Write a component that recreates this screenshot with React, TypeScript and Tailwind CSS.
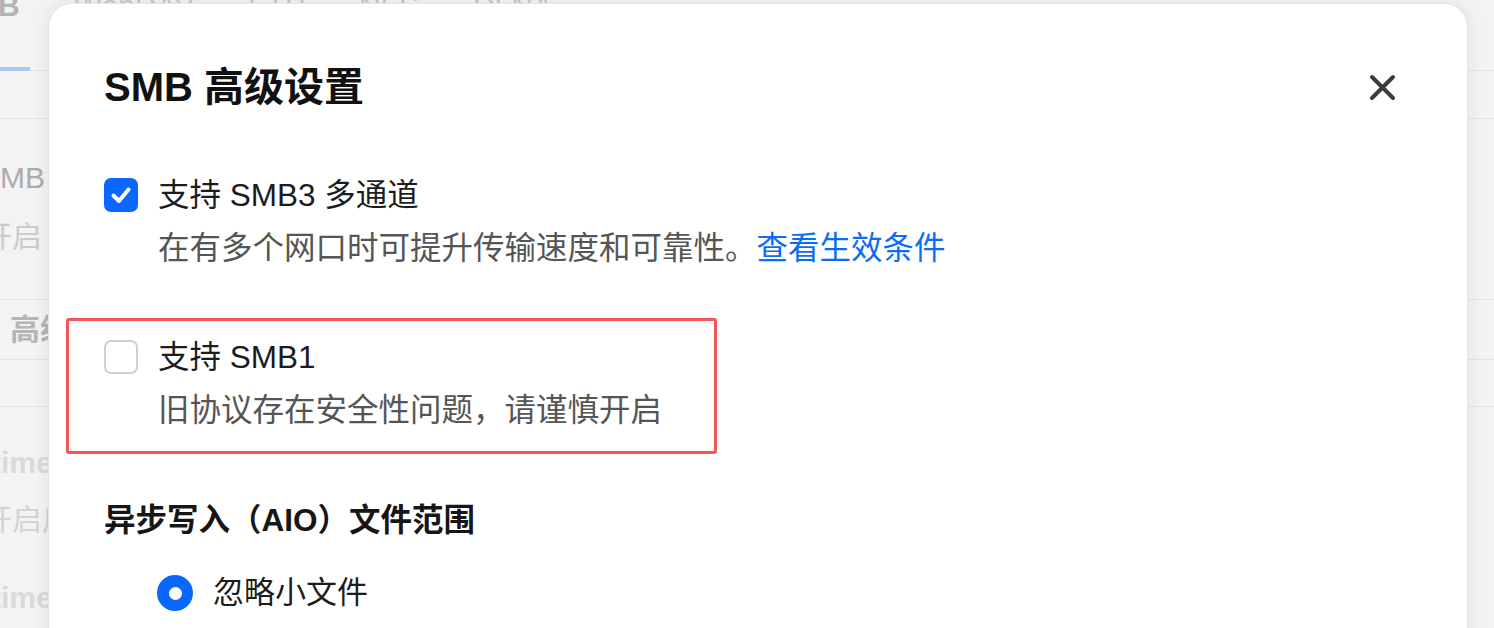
import React from "react";

const FONT = { fontFamily: '"Liberation Sans", "Noto Sans CJK SC", sans-serif' };

function CheckedBox() {
  return (
    <div className="mt-[3px] flex h-[34px] w-[34px] shrink-0 items-center justify-center rounded-[7px] bg-[#0a68ff]">
      <svg width="34" height="34" viewBox="0 0 34 34" fill="none">
        <polyline
          points="9.5,17.5 15,23 24.5,11.5"
          stroke="#fff"
          strokeWidth="4"
          strokeLinecap="round"
          strokeLinejoin="round"
        />
      </svg>
    </div>
  );
}

function EmptyBox() {
  return <div className="mt-[3px] h-[34px] w-[34px] shrink-0 rounded-[7px] border-2 border-[#cfcfcf] bg-white" />;
}

function CloseIcon() {
  return (
    <svg width="27" height="27" viewBox="0 0 27 27" fill="none">
      <path d="M3 3 L24 24 M24 3 L3 24" stroke="#3b3b3b" strokeWidth="4" strokeLinecap="round" />
    </svg>
  );
}

function BackdropPage() {
  return (
    <div className="flex h-full w-full flex-col bg-[#f3f3f3]" style={FONT}>
      {/* tab bar */}
      <div className="relative h-[71px] border-b border-[#e3e3e3]">
        <div className="-mt-[12px] flex items-end gap-[54px] text-[30px] leading-[36px]">
          <div className="-ml-[47px] flex flex-col">
            <span className="font-bold text-[#b3b3b3]">SMB</span>
          </div>
          <span className="text-[#c9c9c9]">WebDAV</span>
          <span className="text-[#c9c9c9]">FTP</span>
          <span className="text-[#c9c9c9]">NFS</span>
          <span className="text-[#c9c9c9]">DLNA</span>
        </div>
        <div className="absolute bottom-[-1px] left-0 h-[4px] w-[30px] bg-[#a9c8f6]" />
      </div>
      <div className="h-[48px] border-b border-[#e3e3e3]" />
      <div className="-ml-[20px] flex h-[181px] flex-col border-b border-[#e3e3e3] pt-[41px]">
        <span className="text-[30px] leading-[36px] text-[#acacac]">SMB</span>
        <span className="ml-[2px] mt-[23px] text-[30px] leading-[36px] text-[#cbcbcb]">开启</span>
      </div>
      <div className="flex h-[60px] items-center border-b border-[#e3e3e3] pl-[10px]">
        <span className="text-[30px] font-bold leading-[36px] text-[#b5b5b5]">高级设置</span>
      </div>
      <div className="h-[47px] border-b border-[#e3e3e3]" />
      <div className="-ml-[9px] flex flex-col pt-[38px]">
        <span className="text-[30px] font-bold leading-[36px] text-[#dadada]">time</span>
        <span className="-ml-[9px] mt-[21px] text-[30px] leading-[36px] text-[#d3d3d3]">开启后</span>
        <span className="mt-[42px] text-[30px] font-bold leading-[36px] text-[#dadada]">time</span>
      </div>
    </div>
  );
}

function SettingsDialog() {
  return (
    <div
      className="absolute left-[48px] top-[3px] h-[720px] w-[1420px] rounded-[24px] border border-[#e6e6e6] bg-white shadow-[0_0_18px_rgba(0,0,0,0.08)]"
      style={FONT}
    >
      <div className="flex flex-col pl-[55px] pr-[71px] pt-[59px]">
        <div className="flex h-[48px] items-center justify-between">
          <h2 className="text-[40px] font-bold leading-[48px] text-[#111111]">SMB 高级设置</h2>
          <button className="flex h-[27px] w-[27px] items-center justify-center">
            <CloseIcon />
          </button>
        </div>

        <div className="mt-[64px] flex gap-[20px]">
          <CheckedBox />
          <div className="flex flex-col">
            <span className="text-[31.5px] leading-[40px] text-[#1c1c1c]">支持 SMB3 多通道</span>
            <span className="mt-[13px] text-[31.5px] leading-[40px] text-[#555555]">
              在有多个网口时可提升传输速度和可靠性。
              <span className="text-[#0b6cf4]">查看生效条件</span>
            </span>
          </div>
        </div>

        <div className="-ml-[38px] mt-[50px] flex h-[136px] w-[651px] gap-[20px] rounded-[3px] border-[3px] border-[#f25656] pl-[35px] pt-[16px]">
          <EmptyBox />
          <div className="flex flex-col">
            <span className="text-[31.5px] leading-[40px] text-[#1c1c1c]">支持 SMB1</span>
            <span className="mt-[13px] text-[31.5px] leading-[40px] text-[#555555]">
              旧协议存在安全性问题，请谨慎开启
            </span>
          </div>
        </div>

        <div className="mt-[46px] text-[31.5px] font-bold leading-[40px] text-[#161616]">
          异步写入（AIO）文件范围
        </div>

        <div className="ml-[53px] mt-[33px] flex items-center gap-[20px]">
          <div className="flex h-[36px] w-[36px] items-center justify-center rounded-full bg-[#0a68ff]">
            <div className="h-[13px] w-[13px] rounded-full bg-white" />
          </div>
          <span className="text-[31px] leading-[40px] text-[#1c1c1c]">忽略小文件</span>
        </div>
      </div>
    </div>
  );
}

export default function App() {
  return (
    <div className="relative h-[628px] w-[1494px] overflow-hidden">
      <BackdropPage />
      <SettingsDialog />
    </div>
  );
}
